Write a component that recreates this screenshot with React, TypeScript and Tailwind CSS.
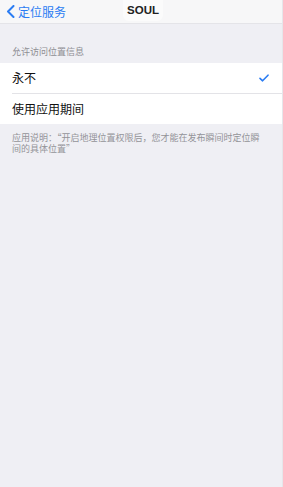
import React from "react";

export default function App() {
  const cjk = { fontFamily: '"Noto Sans CJK SC", "Noto Sans", sans-serif' };
  return (
    <div className="w-[283px] h-[487px] bg-[#efeff4] flex flex-col overflow-hidden border-r border-[#e6e6ea]" style={cjk}>
      <div className="relative h-[24px] bg-[#f7f7f8] border-b border-[#e4e4e8] flex items-center shrink-0">
        <div className="flex items-center pl-[6px] text-[#2a7cf3]">
          <svg width="9" height="13" viewBox="0 0 9 13" className="mr-[3px]">
            <path d="M7.5 1 L2 6.5 L7.5 12" fill="none" stroke="#2a7cf3" strokeWidth="2" strokeLinecap="round" strokeLinejoin="round" />
          </svg>
          <span className="text-[12px] leading-[14px]">定位服务</span>
        </div>
        <div className="absolute left-[123px] top-0 w-[40px] h-[21px] rounded-b-[6px] bg-[#fbfbfb] flex items-center justify-center">
          <span className="text-[11.5px] font-bold text-[#222] leading-none" style={{ fontFamily: '"Liberation Sans", Arial, sans-serif' }}>SOUL</span>
        </div>
      </div>
      <div className="pt-[22px] pl-[12px] pb-[6px] text-[9px] leading-[11px] text-[#8e8e93]">允许访问位置信息</div>
      <div className="bg-white">
        <div className="h-[30px] flex items-center justify-between pl-[12px] pr-[13px]">
          <span className="text-[12px] text-[#111] leading-none">永不</span>
          <svg width="10" height="8" viewBox="0 0 10 8">
            <path d="M1 4.3 L3.6 6.8 L9 1.2" fill="none" stroke="#2a7cf3" strokeWidth="1.6" strokeLinecap="round" strokeLinejoin="round" />
          </svg>
        </div>
        <div className="ml-[12px] h-px bg-[#e3e3e7]" />
        <div className="h-[30px] flex items-center pl-[12px]">
          <span className="text-[12px] text-[#111] leading-none">使用应用期间</span>
        </div>
      </div>
      <div className="pt-[8px] pl-[12px] pr-[14px] text-[9px] leading-[11px] text-[#939398]">
        应用说明：“开启地理位置权限后，您才能在发布瞬间时定位瞬间的具体位置”
      </div>
    </div>
  );
}
